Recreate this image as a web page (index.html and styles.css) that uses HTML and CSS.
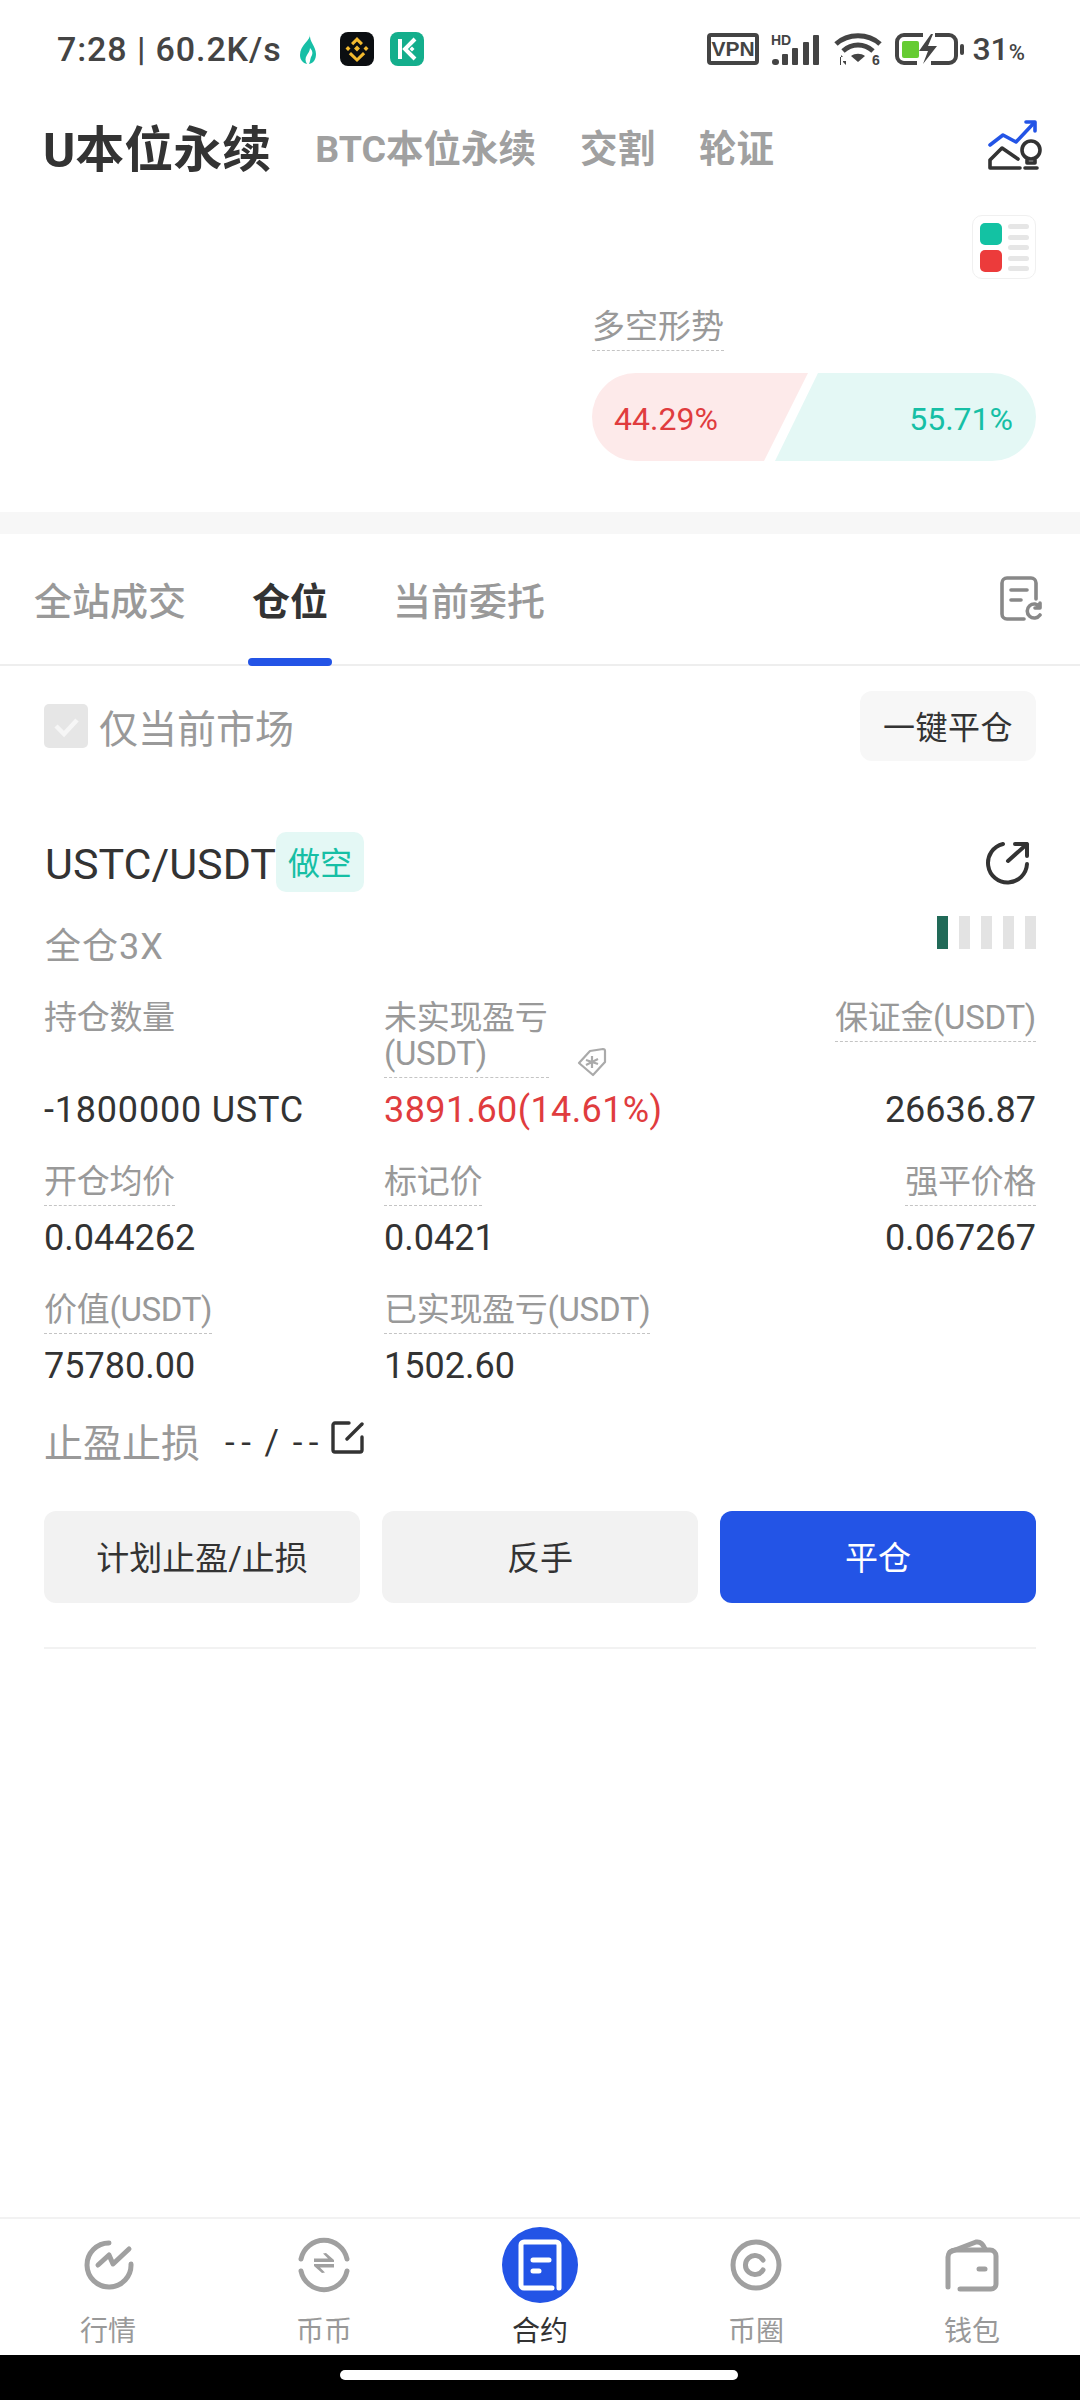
FILE: index.html
```html
<!DOCTYPE html>
<html lang="zh-CN">
<head>
<meta charset="utf-8">
<title>合约</title>
<link rel="stylesheet" href="styles.css">
</head>
<body>
<div class="app">
  <header class="status">
    <div class="status-left">
      <span class="clock">7:28 | 60.2K/s</span>
      <svg class="app-ico" viewBox="0 0 34 34"><rect width="34" height="34" rx="8" fill="#fff"/><path fill="#17bfa6" d="M20 2c1 6-10 11-10 21 0 5 3 8 7 9-2-3-2-6 0-9 1-2 3-4 3-7 3 3 3 6 1 9-1 3-1 5-2 7 5-1 7-5 7-10 0-8-7-12-6-20z"/></svg>
      <svg class="app-ico" viewBox="0 0 34 34"><rect width="34" height="34" rx="8" fill="#0b0e11"/><path fill="#f3ba2f" d="M17 5l6 6-2.200 2.200L17 9.400l-3.800 3.800L11 11zM8 14l2.500 2.500L8 19l-2.500-2.500zM26 14l2.500 2.500L26 19l-2.500-2.500zM17 13.500l3 3-3 3-3-3zM11 20l3.800 3.800L17 26l2.200-2.200L23 20l2.200 2.200L17 30l-8.200-7.800z"/></svg>
      <svg class="app-ico" viewBox="0 0 34 34"><rect width="34" height="34" rx="8" fill="#14ae8c"/><path fill="none" stroke="#fff" stroke-width="4" d="M10 7v20M25 7l-10 10 10 10"/><path fill="#fff" d="M22 14.500l2.500 2.500-2.500 2.500-2.500-2.500z"/></svg>
    </div>
    <div class="status-right">
      <svg class="s-vpn" viewBox="0 0 52 32"><rect class="s-line" x="2" y="2" width="48" height="28" rx="2"/><text class="s-vpn-text" x="26" y="23">VPN</text></svg>
      <svg class="s-signal" viewBox="0 0 50 32"><text class="s-small" x="0" y="12">HD</text><rect class="s-fill" x="1" y="26" width="7" height="6" rx="3"/><rect class="s-fill" x="11" y="21" width="6" height="11" rx="1"/><rect class="s-fill" x="21" y="15" width="6" height="17" rx="1"/><rect class="s-fill" x="32" y="9" width="6" height="23" rx="1"/><rect class="s-fill" x="42" y="2" width="6" height="30" rx="1"/></svg>
      <svg class="s-wifi" viewBox="0 0 48 32"><path class="s-arc" d="M2 11C14 0 34 0 46 11"/><path class="s-arc" d="M9 18C18 10 30 10 39 18"/><path class="s-fill" d="M24 29l-7-6c4-3 10-3 14 0z"/><path class="s-fill" d="M3 24h6l-2-2v10h-1V24zM12 22v10l-3-3v-1h3z"/><text class="s-small" x="38" y="32">6</text></svg>
      <svg class="s-batt" viewBox="0 0 70 32"><path class="s-line" d="M28 2H9a7 7 0 0 0-7 7v14a7 7 0 0 0 7 7h13M40 2h14a7 7 0 0 1 7 7v14a7 7 0 0 1-7 7H36"/><rect class="s-green" x="7" y="8" width="17" height="17" rx="2"/><path class="s-fill" d="M36 1L24 18h9l-5 13 14-18h-9l5-12z"/><rect class="s-fill" x="65" y="11" width="4" height="11" rx="2"/></svg>
      <span class="batt-pct">31<small>%</small></span>
    </div>
  </header>

  <nav class="market-nav">
    <span class="market-main">U本位永续</span>
    <span class="market-sub">BTC本位永续</span>
    <span class="market-sub">交割</span>
    <span class="market-sub">轮证</span>
    <svg class="insight-ico" viewBox="18 20 54 50"><path class="in-blue" d="M20 45l13-10 13 7 17-18"/><path class="in-blue" d="M56 22h9v9"/><path class="in-dark" d="M20 68v-8l12-12 16 11M20 68h30"/><circle class="in-dark" cx="61" cy="50" r="9"/><path class="in-dark" d="M57 60v3h8v-3M55 68h12"/></svg>
  </nav>

  <section class="overview">
    <div class="mini-book">
      <span class="mini-sq mini-up"></span>
      <span class="mini-sq mini-down"></span>
      <span class="mini-lines"><i></i><i></i><i></i><i></i><i></i></span>
    </div>
    <div class="sentiment">
      <span class="dash sentiment-label">多空形势</span>
      <div class="sentiment-bar">
        <span class="bar-long">44.29%</span>
        <span class="bar-short">55.71%</span>
      </div>
    </div>
  </section>

  <div class="band"></div>

  <div class="order-tabs">
    <span class="o-tab">全站成交</span>
    <span class="o-tab o-active">仓位</span>
    <span class="o-tab">当前委托</span>
    <svg class="record-ico" viewBox="0 0 42 46"><path class="rec" d="M24 43H7a5 5 0 0 1-5-5V7a5 5 0 0 1 5-5h24a5 5 0 0 1 5 5v16"/><path class="rec" d="M11 14h16M11 24h10"/><path class="rec" d="M40 31a7 7 0 1 0 0 8M40 27v5h-5"/></svg>
  </div>

  <div class="filter-row">
    <label class="check">
      <span class="check-box"><svg viewBox="0 0 44 44"><path class="check-mark" d="M12 22l8 8 13-14"/></svg></span>
      <span class="check-text">仅当前市场</span>
    </label>
    <span class="close-all">一键平仓</span>
  </div>

  <main class="position">
    <div class="pos-head">
      <span class="pos-symbol">USTC/USDT</span>
      <span class="pos-side">做空</span>
      <svg class="share-ico" viewBox="0 0 44 44"><path class="ic-dark" d="M17 3A19.500 19.500 0 1 0 41 23"/><path class="ic-dark" d="M22 20L41 3M29 3h12v12"/></svg>
    </div>
    <div class="pos-sub">
      <span class="pos-mode">全仓3X</span>
      <span class="risk"><i class="risk-on"></i><i></i><i></i><i></i><i></i></span>
    </div>

    <div class="stat-row">
      <div class="stat"><span class="stat-plain">持仓数量</span><span class="stat-val stat-wide">-1800000 USTC</span></div>
      <div class="stat">
        <span class="stat-head"><span class="dash stat-label stat-wrap">未实现盈亏<br>(USDT)</span>
          <svg class="tag-ico" viewBox="0 0 30 30"><path class="tag-line" d="M2 16L13 4l13-2q2 0 2 2v11L16 28z"/><path class="tag-line" d="M15 9l0 12M9 13l12 4M9 18l12-6"/></svg>
        </span>
        <span class="stat-val stat-red">3891.60(14.61%)</span>
      </div>
      <div class="stat stat-end"><span class="dash stat-label">保证金(USDT)</span><span class="stat-val">26636.87</span></div>
    </div>
    <div class="stat-row">
      <div class="stat"><span class="dash stat-label">开仓均价</span><span class="stat-val">0.044262</span></div>
      <div class="stat"><span class="dash stat-label">标记价</span><span class="stat-val">0.0421</span></div>
      <div class="stat stat-end"><span class="dash stat-label">强平价格</span><span class="stat-val">0.067267</span></div>
    </div>
    <div class="stat-row">
      <div class="stat"><span class="dash stat-label">价值(USDT)</span><span class="stat-val">75780.00</span></div>
      <div class="stat"><span class="dash stat-label">已实现盈亏(USDT)</span><span class="stat-val">1502.60</span></div>
    </div>

    <div class="tp-row">
      <span class="tp-label">止盈止损</span>
      <span class="tp-val">-- / --</span>
      <svg class="edit-ico" viewBox="0 0 33 33"><path class="ic-edit" d="M18 2H4a2 2 0 0 0-2 2v25a2 2 0 0 0 2 2h25a2 2 0 0 0 2-2V16"/><path class="ic-edit" d="M16 18L31 3"/></svg>
    </div>

    <div class="actions">
      <span class="act">计划止盈/止损</span>
      <span class="act">反手</span>
      <span class="act act-primary">平仓</span>
    </div>
  </main>

  <footer class="tabbar">
    <div class="tab-item">
      <span class="tab-ico"><svg class="nav-svg" viewBox="0 0 52 52"><path class="nav-line" d="M27 4A22 22 0 1 0 49 25"/><path class="nav-line" d="M16 26l11-10 4 9 16-15"/></svg></span>
      <span class="tab-label">行情</span>
    </div>
    <div class="tab-item">
      <span class="tab-ico"><svg class="nav-svg" viewBox="0 0 52 52"><path class="nav-line" d="M3 20A23.500 23.500 0 0 1 49 20M3 32A23.500 23.500 0 0 0 49 32"/><path class="nav-solid" d="M16 19.500h14l-5-5 3-.5 8 7v2H16zM36 28.500H22l5 5-3 .5-8-7v-2h20z"/></svg></span>
      <span class="tab-label">币币</span>
    </div>
    <div class="tab-item">
      <span class="tab-ico"><svg class="nav-svg-big" viewBox="0 0 76 76"><circle class="nav-blue" cx="38" cy="38" r="38"/><path class="nav-white" d="M50 61H22a3 3 0 0 1-3-3V18a3 3 0 0 1 3-3h32a3 3 0 0 1 3 3v43"/><path class="nav-white" d="M31 33h16M31 44h6"/></svg></span>
      <span class="tab-label tab-on">合约</span>
    </div>
    <div class="tab-item">
      <span class="tab-ico"><svg class="nav-svg" viewBox="0 0 52 52"><circle class="nav-line" cx="26" cy="26" r="23"/><path class="nav-line" d="M33 21a9.500 9.500 0 1 0 0 10"/></svg></span>
      <span class="tab-label">币圈</span>
    </div>
    <div class="tab-item">
      <span class="tab-ico"><svg class="nav-svg" viewBox="0 0 52 52"><path class="nav-line" d="M2 48V18a7 7 0 0 1 7-7h35a6 6 0 0 1 6 6v28a5 5 0 0 1-5 5H14"/><path class="nav-line" d="M4 13L30 3q6-1 9 7"/><path class="nav-line" d="M33 30h6"/></svg></span>
      <span class="tab-label">钱包</span>
    </div>
  </footer>
  <div class="home-area"><span class="home-pill"></span></div>
</div>
</body>
</html>
```
FILE: styles.css
```css
* { box-sizing: border-box; }
html, body { margin: 0; padding: 0; background: #fff; }
body {
  font-family: Roboto, "Noto Sans CJK SC", sans-serif;
  color: #333;
}
.app { width: 1080px; height: 2400px; display: flex; flex-direction: column; overflow: hidden; }

/* status bar */
.status { height: 96px; flex: none; display: flex; justify-content: space-between; align-items: center; padding: 2px 55px 0 57px; }
.status-left, .status-right { display: flex; align-items: center; }
.clock { font-size: 34px; font-weight: 500; color: #444; letter-spacing: .9px; white-space: pre; }
.app-ico { width: 34px; height: 34px; margin-left: 16px; }
.clock + .app-ico { margin-left: 8px; }
.s-vpn { width: 52px; height: 32px; }
.s-signal { width: 50px; height: 32px; margin-left: 12px; }
.s-wifi { width: 48px; height: 32px; margin-left: 13px; }
.s-batt { width: 70px; height: 32px; margin-left: 13px; }
.batt-pct { margin-left: 7px; font-size: 32px; font-weight: 500; color: #444; }
.batt-pct small { font-size: 22px; }
.s-line { fill: none; stroke: #444; stroke-width: 4; }
.s-arc { fill: none; stroke: #444; stroke-width: 5; }
.s-fill { fill: #444; }
.s-green { fill: #66cc33; }
.s-vpn-text { font: 700 21px "Liberation Sans", sans-serif; fill: #444; text-anchor: middle; }
.s-small { font: 700 14px "Liberation Sans", sans-serif; fill: #444; }

/* market nav */
.market-nav { height: 104px; flex: none; display: flex; align-items: center; padding: 0 38px 5px 43px; }
.market-main { font-size: 49px; font-weight: 700; color: #333; margin-right: 44px; }
.market-sub { font-size: 37.500px; font-weight: 700; color: #a0a0a0; margin-right: 44px; }
.insight-ico { width: 54px; height: 50px; margin: 0 0 1px auto; }
.in-blue { fill: none; stroke: #2354e6; stroke-width: 3.6; stroke-linejoin: round; stroke-linecap: round; }
.in-dark { fill: none; stroke: #333; stroke-width: 3.6; stroke-linejoin: round; stroke-linecap: round; }

/* overview */
.overview { height: 312px; flex: none; display: flex; flex-direction: column; align-items: flex-end; padding: 15px 44px 0 0; }
.mini-book { position: relative; width: 64px; height: 64px; border: 1px solid #f0f0f0; border-radius: 10px; }
.mini-sq { position: absolute; left: 7px; width: 22px; height: 22px; border-radius: 5px; }
.mini-up { top: 7px; background: #13c2a3; }
.mini-down { top: 34px; background: #ec3b3b; }
.mini-lines { position: absolute; left: 35px; top: 8px; display: flex; flex-direction: column; gap: 5.600px; }
.mini-lines i { display: block; width: 21px; height: 5px; border-radius: 2.500px; background: #e6e6e6; }
.sentiment { width: 444px; margin-top: 28px; }
.dash { display: inline-block; border-bottom: 1px dashed #c4c4c4; }
.sentiment-label { font-size: 33px; line-height: 40px; padding-bottom: 3px; color: #999; }
.sentiment-bar { display: flex; height: 88px; margin-top: 22px; font-size: 32px; line-height: 92px; }
.bar-long { width: 216px; flex: none; padding-left: 22px; color: #e03c3e; background: #fdeaea; border-radius: 44px 0 0 44px; clip-path: polygon(0 0, 100% 0, calc(100% - 44px) 100%, 0 100%); }
.bar-short { flex: 1; margin-left: -33px; padding-right: 23px; text-align: right; color: #16bfa5; background: #e4f8f5; border-radius: 0 44px 44px 0; clip-path: polygon(43px 0, 100% 0, 100% 100%, 0 100%); }

.band { height: 22px; flex: none; background: #f7f7f7; }

/* order tabs */
.order-tabs { height: 132px; flex: none; display: flex; align-items: center; padding: 5px 38px 0 34px; border-bottom: 2px solid #eeeeee; }
.o-tab { position: relative; font-size: 38px; font-weight: 500; color: #999; line-height: 50px; margin-right: 66px; }
.o-active { color: #333; font-weight: 700; margin-right: 65px; }
.o-active::after { content: ""; position: absolute; left: -4px; right: -4px; bottom: -39px; height: 8px; border-radius: 4px; background: #2354e6; }
.record-ico { width: 42px; height: 46px; margin: 0 0 5px auto; }
.rec { fill: none; stroke: #888; stroke-width: 3.6; stroke-linecap: round; stroke-linejoin: round; }

/* filter */
.filter-row { flex: none; height: 90px; margin-top: 25px; padding: 0 44px; display: flex; justify-content: space-between; align-items: flex-start; }
.check { display: flex; align-items: center; height: 70px; }
.check-box { width: 44px; height: 44px; border-radius: 5px; background: #e6e6e6; }
.check-box svg { display: block; width: 44px; height: 44px; }
.check-mark { fill: none; stroke: #f6f6f6; stroke-width: 4.500; }
.check-text { margin-left: 11px; font-size: 39px; color: #999; }
.close-all { width: 176px; height: 70px; border-radius: 12px; background: #f7f7f7; font-size: 32px; letter-spacing: .5px; line-height: 74px; text-align: center; color: #333; }

/* position */
.position { flex: 1; padding: 0 44px; }
.pos-head { display: flex; align-items: center; height: 60px; margin-top: 51px; }
.pos-symbol { font-size: 43px; color: #333; padding: 3px 0 0 1px; }
.pos-side { width: 88px; height: 60px; border-radius: 10px; background: #e4f8f5; color: #16bfa5; font-size: 32px; line-height: 64px; text-align: center; }
.share-ico { width: 44px; height: 44px; margin: 2px 6px 0 auto; }
.ic-dark { fill: none; stroke: #333; stroke-width: 4; stroke-linecap: round; stroke-linejoin: round; }
.pos-sub { display: flex; justify-content: space-between; align-items: flex-start; height: 60px; margin-top: 24px; }
.pos-mode { font-size: 36px; line-height: 40px; padding: 11px 0 0 1px; color: #999; letter-spacing: 1px; }
.risk { display: flex; gap: 11px; }
.risk i { display: block; width: 11px; height: 33px; background: #e3e3e3; }
.risk i.risk-on { background: #216a58; }

.stat-row { display: grid; grid-template-columns: 340px 1fr 1fr; margin-top: 33px; }
.pos-sub + .stat-row { margin-top: 24px; }
.stat { display: flex; flex-direction: column; justify-content: space-between; align-items: flex-start; }
.stat-end { align-items: flex-end; }
.stat-plain, .stat-label { font-size: 33px; line-height: 36px; color: #999; white-space: nowrap; letter-spacing: -.3px; }
.stat-label { padding-bottom: 5px; }
.stat-wrap { width: 165px; }
.stat-head { position: relative; display: block; }
.tag-ico { position: absolute; left: 193px; top: 47px; width: 30px; height: 30px; }
.tag-line { fill: none; stroke: #aaa; stroke-width: 2.200; stroke-linejoin: round; }
.stat-val { margin: 9px 0 -2px; font-size: 36px; line-height: 46px; color: #333; white-space: nowrap; }
.stat-wide { letter-spacing: .8px; }
.stat-red { color: #e03c3e; letter-spacing: .4px; }

.tp-row { display: flex; align-items: center; height: 44px; margin-top: 33px; }
.tp-label { font-size: 39px; color: #999; padding-bottom: 4px; }
.tp-val { margin-left: 25px; font-size: 35px; letter-spacing: 6.500px; word-spacing: -8px; color: #333; white-space: pre; }
.edit-ico { width: 33px; height: 33px; margin: 0 0 9px 6px; }
.ic-edit { fill: none; stroke: #333; stroke-width: 3.400; stroke-linecap: round; stroke-linejoin: round; }

.actions { display: flex; gap: 22px; margin-top: 47px; padding-bottom: 44px; border-bottom: 2px solid #f2f2f2; }
.act { flex: 1; height: 92px; border-radius: 12px; background: #f2f2f2; text-align: center; font-size: 33px; line-height: 96px; color: #333; }
.act-primary { background: #2354e6; color: #fff; }

/* tab bar */
.tabbar { flex: none; height: 138px; display: flex; border-top: 2px solid #f2f2f2; }
.tab-item { flex: 1; display: flex; flex-direction: column; align-items: center; padding-top: 7px; }
.tab-ico { height: 78px; display: flex; align-items: center; justify-content: center; }
.nav-svg { width: 52px; height: 52px; overflow: visible; }
.nav-svg-big { width: 76px; height: 76px; }
.nav-line { fill: none; stroke: #a0a0a0; stroke-width: 5; stroke-linecap: round; stroke-linejoin: round; }
.nav-solid { fill: #a0a0a0; }
.nav-blue { fill: #2354e6; }
.nav-white { fill: none; stroke: #fff; stroke-width: 5; stroke-linecap: round; stroke-linejoin: round; }
.tab-label { margin-top: 8px; font-size: 28px; line-height: 40px; color: #999; }
.tab-on { color: #333; }

.home-area { flex: none; height: 45px; background: #000; display: flex; justify-content: center; padding: 15px 2px 0 0; }
.home-pill { width: 398px; height: 10px; border-radius: 5px; background: #fff; }
```
